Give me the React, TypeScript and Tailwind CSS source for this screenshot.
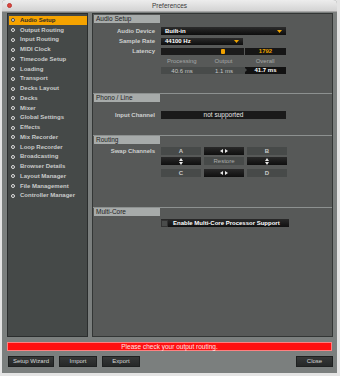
const items = [
  "Audio Setup",
  "Output Routing",
  "Input Routing",
  "MIDI Clock",
  "Timecode Setup",
  "Loading",
  "Transport",
  "Decks Layout",
  "Decks",
  "Mixer",
  "Global Settings",
  "Effects",
  "Mix Recorder",
  "Loop Recorder",
  "Broadcasting",
  "Browser Details",
  "Layout Manager",
  "File Management",
  "Controller Manager",
];

function Header({ title }: { title: string }) {
  return (
    <div className="border-t border-[#8d9190]">
      <div className="ml-[1px] w-[66px] h-[8px] bg-[#a7abaa] text-[#222] text-[6.5px] leading-[8px] pl-[2px]">{title}</div>
    </div>
  );
}

function Row({ label, children, className = "" }: { label?: string; children: React.ReactNode; className?: string }) {
  return (
    <div className={"flex items-center " + className}>
      <div className="w-[65px] pr-[3px] text-right text-[6px] text-[#cfd1d0] font-bold whitespace-nowrap">{label}</div>
      <div className="ml-[3px] flex items-center gap-[3px]">{children}</div>
    </div>
  );
}

function Tri() {
  return (
    <svg width="5" height="3" viewBox="0 0 5 3">
      <path d="M0 0 H5 L2.5 3 Z" fill="#f0a500" />
    </svg>
  );
}

function LR() {
  return (
    <svg width="8" height="4" viewBox="0 0 8 4">
      <path d="M0 2 L3 0 V4 Z M8 2 L5 0 V4 Z" fill="#e8e8e8" />
    </svg>
  );
}

function UD() {
  return (
    <svg width="4" height="7" viewBox="0 0 4 7">
      <path d="M2 0 L4 3 H0 Z M2 7 L4 4 H0 Z" fill="#e8e8e8" />
    </svg>
  );
}

function Cell({ dark, children }: { dark?: boolean; children: React.ReactNode }) {
  return (
    <div
      className={
        "w-[40px] h-[8px] flex items-center justify-center text-[6px] font-bold " +
        (dark ? "bg-gradient-to-b from-[#2a2a2a] to-[#0f0f0f] text-white" : "bg-[#474a49] text-[#c9cbca]")
      }
    >
      {children}
    </div>
  );
}

function Btn({ label, w }: { label: string; w: string }) {
  return (
    <div className={"h-[11px] bg-gradient-to-b from-[#363838] to-[#262828] border border-[#1e2020] flex items-center justify-center text-[6px] text-[#d6d8d7] " + w}>
      {label}
    </div>
  );
}

export default function App() {
  return (
    <div className="w-[340px] h-[376px] bg-[#e4e4e4] pl-[2px] pr-[3px]" style={{ fontFamily: '"Liberation Sans", Arial, sans-serif' }}>
      <div className="h-[373px] flex flex-col bg-[#7b7f7e] rounded-t-[4px] overflow-hidden">
        <div className="h-[12px] grid grid-cols-[1fr_auto_1fr] items-center bg-gradient-to-b from-[#ededed] to-[#d3d3d3] border-b border-[#a9a9a9]">
          <div className="pl-[5px]">
            <div className="w-[5px] h-[5px] rounded-full bg-[#e0443e] border border-[#b83a35]" />
          </div>
          <div className="text-[6.5px] text-[#3a3a3a]">Preferences</div>
          <div />
        </div>

        <div className="flex mt-[1px] pl-[5px] pr-[4px] gap-[4px] h-[324px]">
          <div className="w-[81px] bg-[#454948] border border-[#2b2e2e] pt-[1.5px] pl-[1px]">
            {items.map((t, i) => (
              <div
                key={t}
                className={
                  "h-[9.75px] flex items-center pl-[2px] gap-[5px] text-[6px] font-bold whitespace-nowrap " +
                  (i === 0 ? "bg-[#f5a300] text-[#2a2a2a]" : "text-[#c9cbca]")
                }
              >
                <div className={"w-[4px] h-[4px] rounded-full border " + (i === 0 ? "border-[#444] bg-[#eee]" : "border-[#e0e0e0]")} />
                {t}
              </div>
            ))}
          </div>

          <div className="flex-1 bg-[#575958] border border-[#333635] flex flex-col">
            <div className="h-[79px]">
              <div className="h-[1px]" />
              <div className="ml-[1px] w-[66px] h-[8px] bg-[#a7abaa] text-[#222] text-[6.5px] leading-[8px] pl-[2px]">Audio Setup</div>
              <Row label="Audio Device" className="mt-[4px] h-[8px]">
                <div className="w-[125px] h-[8px] bg-gradient-to-b from-[#2c2c2c] to-[#0e0e0e] flex items-center justify-between px-[4px] text-[6px] font-bold text-white">
                  Built-in
                  <Tri />
                </div>
              </Row>
              <Row label="Sample Rate" className="mt-[3px] h-[7px]">
                <div className="w-[82px] h-[7px] bg-gradient-to-b from-[#2c2c2c] to-[#0e0e0e] flex items-center justify-between px-[4px] text-[6px] font-bold text-white">
                  44100 Hz
                  <Tri />
                </div>
              </Row>
              <Row label="Latency" className="mt-[3px] h-[7px]">
                <div className="w-[125px] h-[7px] flex gap-[1px]">
                  <div className="w-[83px] bg-[#1b1b1b] relative">
                    <div className="absolute left-[60px] top-[1px] w-[4px] h-[5px] bg-[#f2a200] rounded-[1px]" />
                  </div>
                  <div className="flex-1 bg-[#161616] flex items-center justify-center text-[6px] font-bold text-[#e9a200]">1792</div>
                </div>
              </Row>
              <Row className="mt-[3px] h-[6px]">
                <div className="w-[125px] grid grid-cols-3 text-[6px] text-[#a4a7a6] text-center">
                  <div>Processing</div>
                  <div>Output</div>
                  <div>Overall</div>
                </div>
              </Row>
              <Row className="mt-[3px] h-[7px]">
                <div className="w-[125px] h-[7px] flex text-[6px]">
                  <div className="w-[84px] bg-[#484b4a] grid grid-cols-2 text-center text-[#c5c7c6] items-center">
                    <div>40.6 ms</div>
                    <div>1.1 ms</div>
                  </div>
                  <div className="flex-1 bg-[#121212] flex items-center justify-center text-white font-bold relative">
                    <div className="absolute left-0 top-[1px] w-0 h-0 border-y-[2.5px] border-y-transparent border-l-[2px] border-l-[#484b4a]" />
                    41.7 ms
                  </div>
                </div>
              </Row>
            </div>

            <div className="h-[42px]">
              <Header title="Phono / Line" />
              <Row label="Input Channel" className="mt-[9px] h-[8px]">
                <div className="w-[125px] h-[8px] bg-[#1a1a1a] flex items-center justify-center text-[6.5px] text-[#e6e6e6]">not supported</div>
              </Row>
            </div>

            <div className="h-[72px]">
              <Header title="Routing" />
              <Row label="Swap Channels" className="mt-[3px] h-[8px]">
                <Cell>A</Cell>
                <Cell dark><LR /></Cell>
                <Cell>B</Cell>
              </Row>
              <div className="h-[2px]" />
              <Row className="h-[8px]">
                <Cell dark><UD /></Cell>
                <Cell><span className="font-normal text-[#a9acab]">Restore</span></Cell>
                <Cell dark><UD /></Cell>
              </Row>
              <div className="h-[4px]" />
              <Row className="h-[8px]">
                <Cell>C</Cell>
                <Cell dark><LR /></Cell>
                <Cell>D</Cell>
              </Row>
            </div>

            <div className="flex-1">
              <Header title="Multi-Core" />
              <Row className="mt-[3px] h-[8px]">
                <div className="w-[128px] h-[8px] bg-gradient-to-b from-[#2a2a2a] to-[#101010] flex items-center gap-[5px] text-[6px] font-bold text-white whitespace-nowrap">
                  <div className="w-[7px] h-[7px] bg-[#4a4c4b] border border-[#333]" />
                  Enable Multi-Core Processor Support
                </div>
              </Row>
            </div>
          </div>
        </div>

        <div className="mt-[5px] ml-[5px] mr-[5px] h-[9px] bg-[#ff1010] border border-[#ff8080] flex items-center justify-center text-[6.5px] text-[#ffe4e4]">
          Please check your output routing.
        </div>

        <div className="mt-[5px] ml-[6px] mr-[4px] flex gap-[5px]">
          <Btn label="Setup Wizard" w="w-[46px]" />
          <Btn label="Import" w="w-[38px]" />
          <Btn label="Export" w="w-[38px]" />
          <div className="flex-1" />
          <Btn label="Close" w="w-[37px]" />
        </div>
      </div>
    </div>
  );
}
